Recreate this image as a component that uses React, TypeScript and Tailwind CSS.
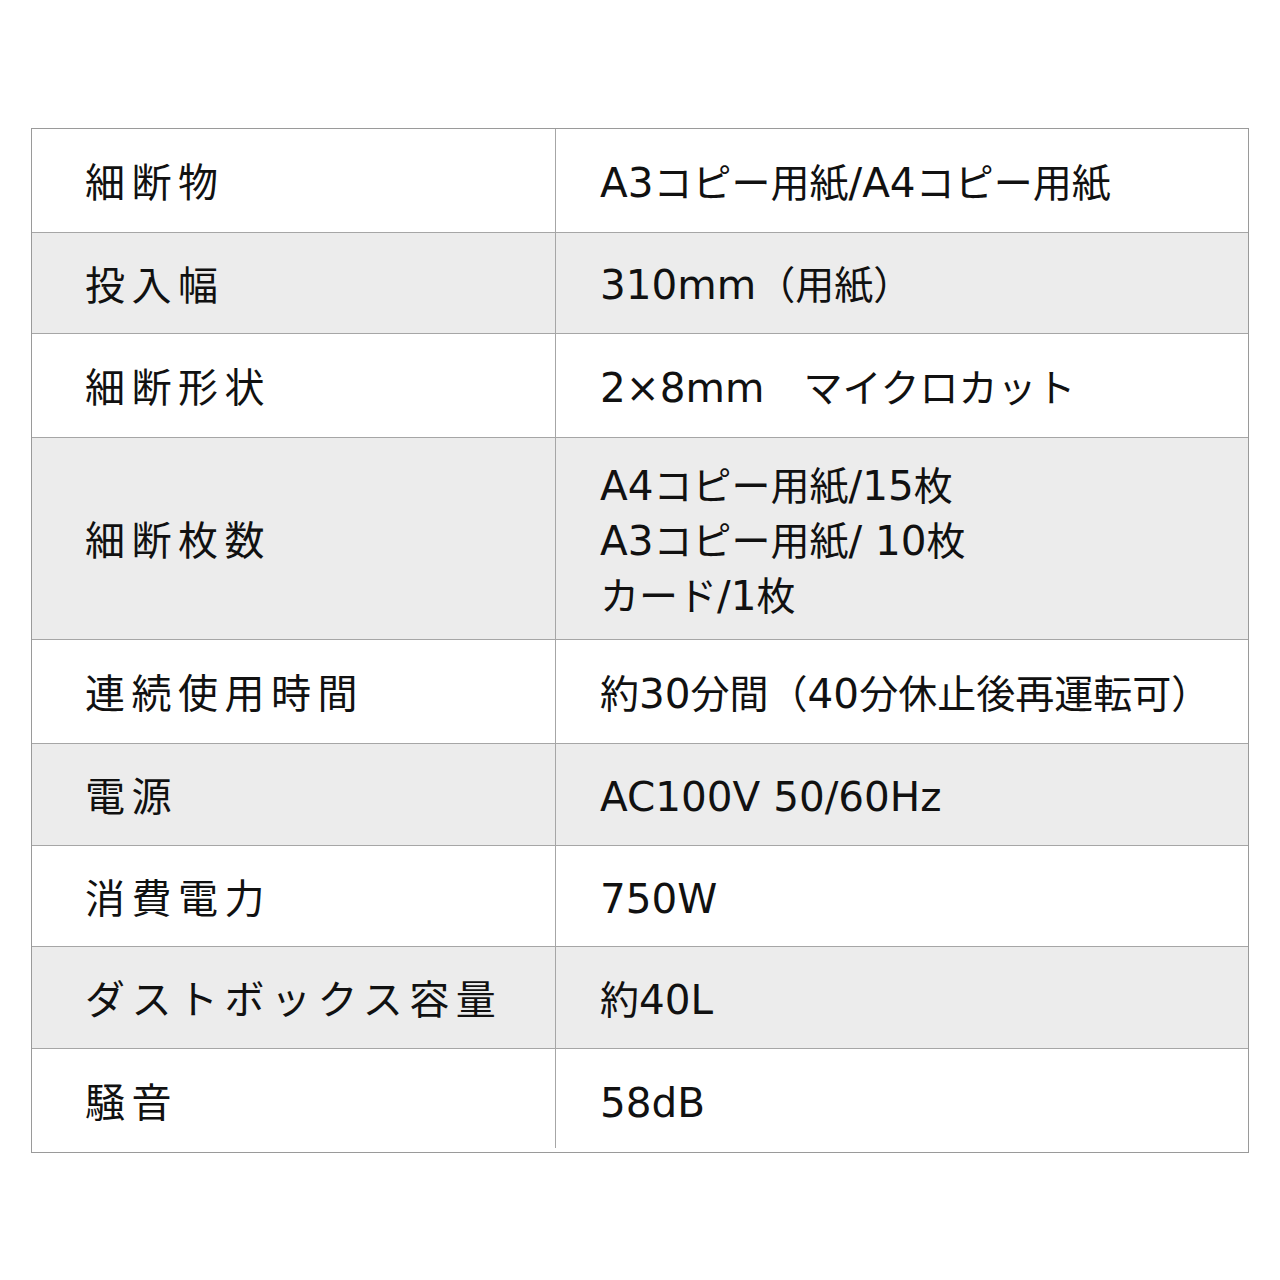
import React from "react";

const rows: { label: string; value: string[]; h: number; bg: string }[] = [
  { label: "細断物", value: ["A3コピー用紙/A4コピー用紙"], h: 104, bg: "bg-white" },
  { label: "投入幅", value: ["310mm（用紙）"], h: 101, bg: "bg-[#ececec]" },
  { label: "細断形状", value: ["2×8mm　マイクロカット"], h: 104, bg: "bg-white" },
  { label: "細断枚数", value: ["A4コピー用紙/15枚", "A3コピー用紙/ 10枚", "カード/1枚"], h: 202, bg: "bg-[#ececec]" },
  { label: "連続使用時間", value: ["約30分間（40分休止後再運転可）"], h: 104, bg: "bg-white" },
  { label: "電源", value: ["AC100V 50/60Hz"], h: 102, bg: "bg-[#ececec]" },
  { label: "消費電力", value: ["750W"], h: 101, bg: "bg-white" },
  { label: "ダストボックス容量", value: ["約40L"], h: 102, bg: "bg-[#ececec]" },
  { label: "騒音", value: ["58dB"], h: 104, bg: "bg-white" },
];

const cjk = /[\u3000-\u30ff\u3400-\u9fff\uff00-\uffef]/;

function split(text: string) {
  const runs: { s: string; c: boolean }[] = [];
  for (const ch of text) {
    const c = cjk.test(ch);
    const last = runs[runs.length - 1];
    if (last && last.c === c) last.s += ch;
    else runs.push({ s: ch, c });
  }
  return runs;
}

function Mixed({ text }: { text: string }) {
  return (
    <>
      {split(text).map((r, i) =>
        r.c ? (
          <span key={i} className="text-[39px]">{r.s}</span>
        ) : (
          <span key={i} className="text-[40.5px]">{r.s}</span>
        )
      )}
    </>
  );
}

export default function App() {
  return (
    <div
      className="w-[1280px] h-[1280px] bg-white pt-[128px] pl-[31px] text-[#111]"
      style={{ fontFamily: '"DejaVu Sans", "Noto Sans CJK JP", sans-serif' }}
    >
      <div className="w-[1218px] border border-[#9a9a9a] flex flex-col">
        {rows.map((r, i) => (
          <div
            key={i}
            className={`flex ${r.bg} ${i > 0 ? "border-t border-[#a6a6a6]" : ""}`}
            style={{ height: r.h - (i > 0 ? 0 : 1) }}
          >
            <div className="w-[523px] shrink-0 flex items-center pl-[53px] pt-[5px] text-[40px] tracking-[6.5px] leading-none">
              {r.label}
            </div>
            <div className={`w-px bg-[#a6a6a6] ${i === rows.length - 1 ? "mb-[4px]" : ""}`} />
            <div className="flex-1 flex flex-col justify-center pl-[44px] pt-[5px] text-[40px] leading-[54px]">
              {r.value.map((v, j) => (
                <div key={j} className="whitespace-pre">
                  <Mixed text={v} />
                </div>
              ))}
            </div>
          </div>
        ))}
      </div>
    </div>
  );
}
